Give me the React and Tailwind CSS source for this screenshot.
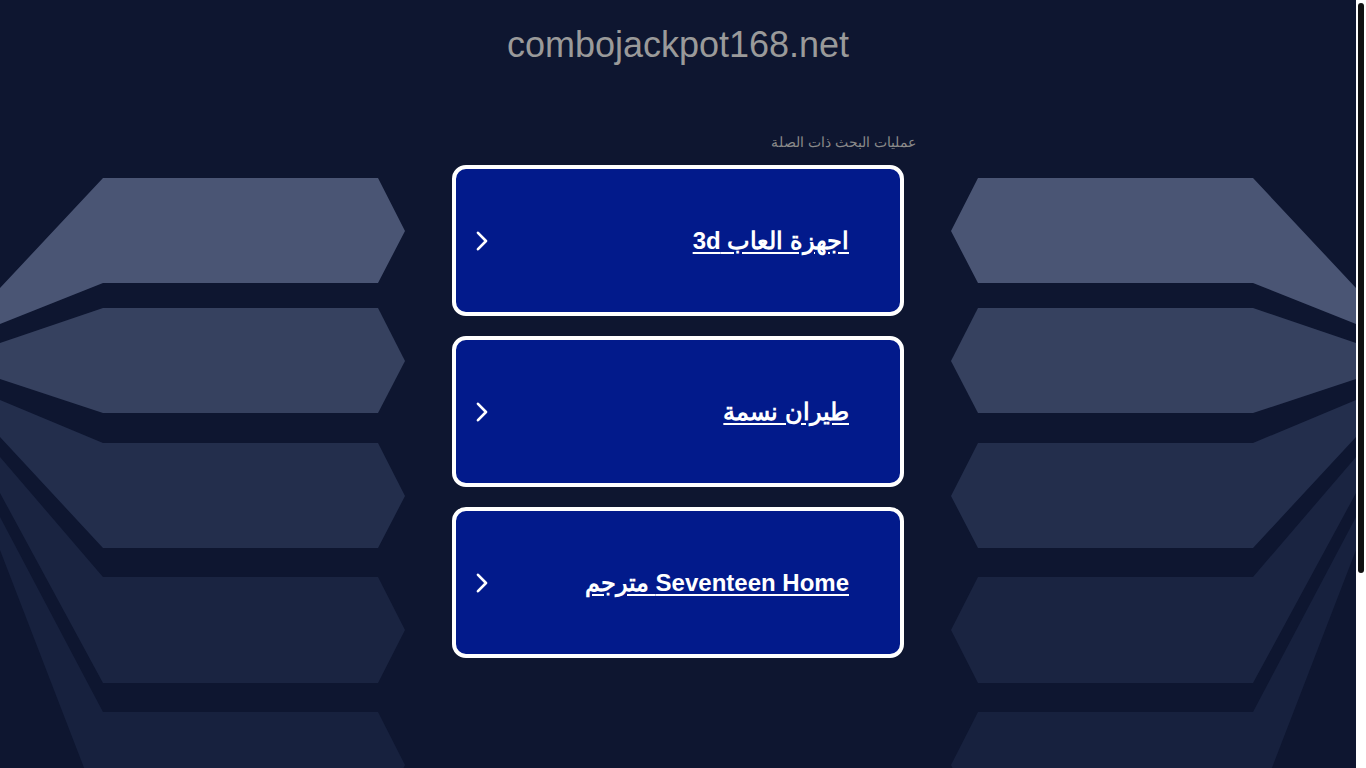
import React from 'react';

// Liste des recherches liées
const links = ['اجهزة العاب 3d', 'طيران نسمة', 'Seventeen Home مترجم'];

// Formes décoratives du fond (côté gauche, le côté droit est le miroir)
const shapes = [
  { points: '0,288 103,178 378,178 405,231 378,283 103,283 0,324', fill: '#4a5574' },
  { points: '0,343 103,308 378,308 405,361 378,413 103,413 0,379', fill: '#36415f' },
  { points: '0,400 103,443 378,443 405,496 378,548 103,548 0,437', fill: '#232e4c' },
  { points: '0,457 103,577 378,577 405,630 378,683 103,683 0,493', fill: '#1a2441' },
  { points: '0,517 103,712 378,712 405,765 378,817 103,817 0,550', fill: '#17213e' },
];

const SideShapes = ({ className }) => (
  <svg className={className} width="405" height="1030" viewBox="0 0 405 1030">
    {shapes.map((s, i) => (
      <polygon key={i} points={s.points} fill={s.fill} />
    ))}
  </svg>
);

const Chevron = () => (
  <svg width="13" height="20" viewBox="0 0 13 20" className="shrink-0">
    <polyline points="2,1.8 10,10 2,18.2" fill="none" stroke="white" strokeWidth="2.6" strokeLinecap="round" strokeLinejoin="round" />
  </svg>
);

const App = () => {
  return (
    <div className="flex h-screen overflow-hidden bg-[#0e1630] font-['Liberation_Sans',sans-serif]">
      <main className="relative flex-1 overflow-hidden">
        <SideShapes className="absolute left-0 top-0" />
        <SideShapes className="absolute right-0 top-0 -scale-x-100" />

        <div className="relative flex flex-col items-center">
          <h1 className="mt-6 text-[36px] leading-[41px] text-[#9a9a9a]">combojackpot168.net</h1>

          <div className="w-[452px]">
            <div dir="rtl" className="mr-[-12px] mt-[67px] mb-[13px] text-[14px] leading-5 text-[#8a8a8a]">
              عمليات البحث ذات الصلة
            </div>

            <div className="flex flex-col gap-5">
              {links.map((text) => (
                <a
                  key={text}
                  href="#"
                  className="flex h-[151px] items-center rounded-[14px] border-4 border-white bg-[#021a8b] pl-5 pr-[51px]"
                >
                  <Chevron />
                  <div dir="rtl" className="flex-1 text-[24px] font-bold leading-[28px] text-white underline underline-offset-[3px]">
                    {text}
                  </div>
                </a>
              ))}
            </div>
          </div>
        </div>
      </main>

      {/* barre de défilement */}
      <aside className="w-[10px] shrink-0 bg-white pl-[2px] pt-[3px]">
        <div className="h-[570px] w-[6px] rounded-full bg-[#111111]" />
      </aside>
    </div>
  );
};

export default App;
